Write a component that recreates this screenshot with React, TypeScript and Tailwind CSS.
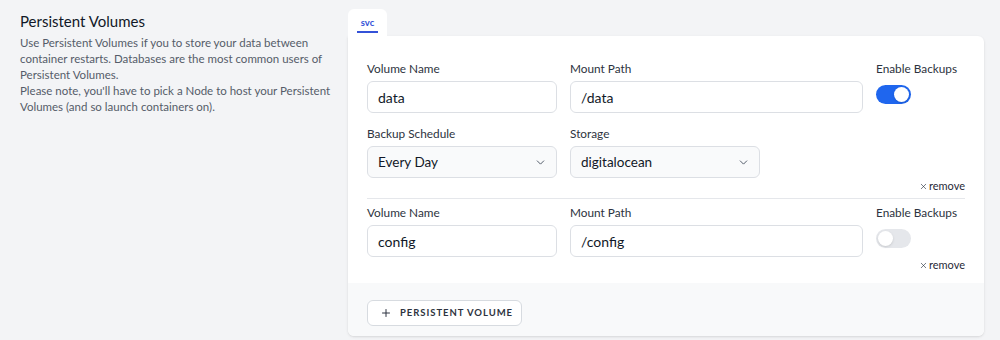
import { ChevronDown, Plus, X } from 'lucide-react';

type Volume = {
  name: string;
  path: string;
  backups: boolean;
};

const volumes: Volume[] = [
  { name: 'data', path: '/data', backups: true },
  { name: 'config', path: '/config', backups: false },
];

function Label({ children }: { children: React.ReactNode }) {
  return (
    <div className="text-[11.8px] leading-4 text-[#2d3340] mb-1 whitespace-nowrap">{children}</div>
  );
}

function TextInput({ value, width }: { value: string; width: string }) {
  return (
    <div
      className={`${width} h-8 flex items-center px-[10px] bg-white border border-[#dcdfe4] rounded-md text-[14px] text-[#111827]`}
    >
      {value}
    </div>
  );
}

function SelectBox({ value }: { value: string }) {
  return (
    <div className="w-[190px] h-8 flex items-center justify-between pl-[10px] pr-[9px] bg-[#f9fafb] border border-[#dcdfe4] rounded-md text-[13.5px] text-[#111827]">
      <span>{value}</span>
      <ChevronDown size={13} strokeWidth={1.75} className="text-[#4b5563]" />
    </div>
  );
}

function Toggle({ on }: { on: boolean }) {
  return (
    <div
      className={`mt-[8px] w-[35px] h-[19px] rounded-full flex items-center px-[2px] ${
        on ? 'bg-[#1f66ee] justify-end' : 'bg-[#e5e7eb] justify-start'
      }`}
    >
      <div className="w-[15px] h-[15px] rounded-full bg-white shadow-sm" />
    </div>
  );
}

function Remove() {
  return (
    <div className="flex justify-end items-center h-3 text-[11px] text-[#1f2937]">
      <X size={9} strokeWidth={1.6} className="mr-[1px]" />
      remove
    </div>
  );
}

function VolumeRow({ vol }: { vol: Volume }) {
  return (
    <div>
      <div className="flex gap-[13px]">
        <div>
          <Label>Volume Name</Label>
          <TextInput value={vol.name} width="w-[190px]" />
        </div>
        <div>
          <Label>Mount Path</Label>
          <TextInput value={vol.path} width="w-[293px]" />
        </div>
        <div>
          <Label>Enable Backups</Label>
          <Toggle on={vol.backups} />
        </div>
      </div>
      {vol.backups && (
        <div className="flex gap-[13px] mt-[13px]">
          <div>
            <Label>Backup Schedule</Label>
            <SelectBox value="Every Day" />
          </div>
          <div>
            <Label>Storage</Label>
            <SelectBox value="digitalocean" />
          </div>
        </div>
      )}
      <div className="mt-[2px]">
        <Remove />
      </div>
    </div>
  );
}

export default function App() {
  return (
    <div
      className="w-[1000px] h-[340px] bg-[#f3f4f6] flex"
      style={{ fontFamily: 'Lato, "Noto Sans", sans-serif' }}
    >
      <div className="w-[348px] pl-5 pt-[11px] pr-4">
        <h2 className="text-[15px] leading-5 text-[#111827] mb-[4px]">Persistent Volumes</h2>
        <p className="text-[11.5px] leading-[16px] text-[#555c69] w-[312px]">
          Use Persistent Volumes if you to store your data between container restarts. Databases are
          the most common users of Persistent Volumes.
          <br />
          Please note, you'll have to pick a Node to host your Persistent Volumes (and so launch
          containers on).
        </p>
      </div>

      <div className="w-[636px] pt-[9px]">
        <div className="flex">
          <div className="w-[39px] h-[27px] bg-white rounded-t-md px-[9px] pt-[9px]">
            <div className="text-[9.5px] leading-[10px] font-bold text-[#3452d8] text-center">svc</div>
            <div className="mt-[3px] h-[2px] bg-[#3452d8]" />
          </div>
        </div>
        <div className="bg-white rounded-b-md rounded-tr-md shadow-sm overflow-hidden">
          <div className="px-[19px] pt-[25px] pb-[12px]">
            {volumes.map((vol, i) => (
              <div key={vol.name}>
                {i > 0 && <div className="h-px bg-[#e5e7eb] mt-[6px] mb-[6px]" />}
                <VolumeRow vol={vol} />
              </div>
            ))}
          </div>
          <div className="bg-[#f8f9fa] pt-[17px] pb-[10px] px-[19px]">
            <button className="h-[26px] w-[155px] flex items-center gap-[8px] pl-[12px] bg-white border border-[#d7dbe0] rounded-md text-[9.5px] font-bold tracking-[0.1em] text-[#2d3340] whitespace-nowrap">
              <Plus size={12} strokeWidth={2} />
              PERSISTENT VOLUME
            </button>
          </div>
        </div>
      </div>
    </div>
  );
}
